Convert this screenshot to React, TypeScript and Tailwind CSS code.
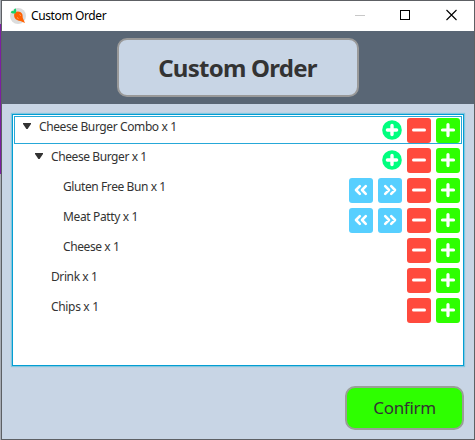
import React from "react";

type Item = {
  label: string;
  pad: string;
  track: string;
  open?: boolean;
  add?: boolean;
  swap?: boolean;
};

const items: Item[] = [
  { label: "Cheese Burger Combo x 1", pad: "pl-2", track: "tracking-[-0.39px]", open: true, add: true },
  { label: "Cheese Burger x 1", pad: "pl-5", track: "tracking-[-0.41px]", open: true, add: true },
  { label: "Gluten Free Bun x 1", pad: "pl-8", track: "tracking-[-0.41px]", swap: true },
  { label: "Meat Patty x 1", pad: "pl-8", track: "tracking-[-0.37px]", swap: true },
  { label: "Cheese x 1", pad: "pl-8", track: "tracking-[-0.4px]" },
  { label: "Drink x 1", pad: "pl-5", track: "tracking-[-0.4px]" },
  { label: "Chips x 1", pad: "pl-5", track: "tracking-[-0.33px]" },
];

function Tile({ color, d, width }: { color: string; d: string; width: number }) {
  return (
    <button className={`h-[25px] w-6 rounded-[3px] ${color}`}>
      <svg width="24" height="25" viewBox="0 0 24 25" fill="none" stroke="white" strokeWidth={width} strokeLinecap="round" strokeLinejoin="round">
        <path d={d} />
      </svg>
    </button>
  );
}

function Row({ item }: { item: Item }) {
  return (
    <div className={`flex h-[30px] items-start ${item.pad}`}>
      <span className="flex w-4 shrink-0 pt-[6px]">
        {item.open && (
          <svg width="8" height="6" viewBox="0 0 8 6">
            <path d="M0 0H8V1L4.6 6H3.4L0 1Z" fill="#333" />
          </svg>
        )}
      </span>
      <span className={`grow whitespace-nowrap pt-px text-[12px] leading-[18px] ${item.track}`}>{item.label}</span>
      <span className="flex items-start gap-[5px] pt-px pr-px">
        {item.add && (
          <svg className="mt-[2px]" width="20" height="20" viewBox="0 0 20 20">
            <circle cx="10" cy="10" r="9.8" fill="#00ff7f" />
            <path d="M10 5.4V14.6M5.4 10H14.6" stroke="white" strokeWidth="3.4" strokeLinecap="round" />
          </svg>
        )}
        {item.swap && (
          <>
            <Tile color="bg-[#57cfff]" width={2.6} d="M10.8 8.2L7 12L10.8 15.8M16.8 8.2L13 12L16.8 15.8" />
            <Tile color="bg-[#57cfff]" width={2.6} d="M7.2 8.2L11 12L7.2 15.8M13.2 8.2L17 12L13.2 15.8" />
          </>
        )}
        <Tile color="bg-[#ff4a3d]" width={3} d="M6.5 12H17.5" />
        <Tile color="bg-[#2eff00]" width={3.2} d="M12 6.6V17.6M6.5 12H17.5" />
      </span>
    </div>
  );
}

export default function App() {
  return (
    <div className="flex h-[440px] w-[475px] overflow-hidden font-['Noto_Sans','Open_Sans',sans-serif] text-[#333]">
      <div className="flex w-px shrink-0 flex-col bg-[#a8adb5]">
        <div className="mt-6 h-[150px] bg-[#7b1fa2]" />
      </div>
      <div className="flex grow flex-col border border-[#5d6064] bg-[#c8d5e5]">
        <header className="flex h-[30px] shrink-0 items-center bg-white pl-2 text-black">
          <svg width="16" height="16" viewBox="0 0 16 16">
            <circle cx="8" cy="8" r="8" fill="#dcdcdc" />
            <path d="M5 4.6C7 2.8 11.6 3.4 12.4 6.6C12.8 8.2 12.4 9 13 10.6L15 15L10.4 13C8.4 12.8 5.4 12 4.4 9.2C3.9 7.4 4 5.6 5 4.6Z" fill="#ff6000" />
            <path d="M9.5 6.6L11 7.6M7 9.5L8.5 10.5" stroke="#ffb27a" strokeWidth=".8" />
            <path d="M5.6 5.3C3.5 5.8 1.6 5.3.7 4.2C1.6 3 2.8 3 3.6 3.2C3.7 1.6 4.6.6 5.7.4C6.5 2 6.4 4 5.6 5.3Z" fill="#14d36b" />
          </svg>
          <span className="ml-[5px] grow text-[12px] leading-4 tracking-[-0.38px]">Custom Order</span>
          <svg className="mr-px" width="118" height="30" viewBox="0 0 118 30" fill="none" shapeRendering="crispEdges">
            <path d="M0 14.5H10" stroke="#c8c8c8" />
            <rect x="45.5" y="9.5" width="9" height="9" stroke="black" />
            <path d="M91.5 9L101.5 19M101.5 9L91.5 19" stroke="black" shapeRendering="auto" strokeWidth="1.1" />
          </svg>
        </header>
        <div className="flex h-[73px] shrink-0 justify-center bg-[#596675] pt-[7px] pr-px">
          <h1 className="flex h-[59px] w-[242px] items-center justify-center rounded-[10px] border-2 border-[#999] bg-[#c8d5e5] text-[24px] font-bold">
            <span className="tracking-[-0.75px]">Custom Order</span>
          </h1>
        </div>
        <main className="mt-[10px] ml-[10px] h-[252px] w-[452px] shrink-0 border border-[#039ed3] bg-white shadow-[0_0_1px_1px_#83c6df]">
          <div className="relative px-[2px] pt-[2px]">
            <div className="pointer-events-none absolute top-px left-px h-7 w-[448px] border border-[#26a8d8]" />
            <div className="relative">
              {items.map((item) => (
                <Row key={item.label} item={item} />
              ))}
            </div>
          </div>
        </main>
        <footer className="flex justify-end pt-5 pr-[10px]">
          <button className="h-11 w-[119px] rounded-[10px] border-2 border-[#999f96] bg-[#2eff00] text-[17px]">
            <span className="tracking-[-0.3px]">Confirm</span>
          </button>
        </footer>
      </div>
    </div>
  );
}
